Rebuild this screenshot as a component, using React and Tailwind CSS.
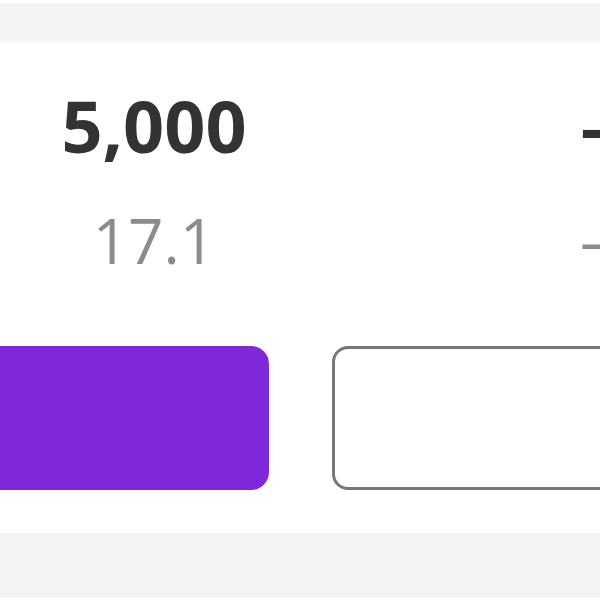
import React from 'react';

const stats = [
  { value: '5,000', sub: '17.1' },
  { value: '–', sub: '–' },
];

function App() {
  return (
    <div className="w-[600px] h-[600px] overflow-hidden bg-white font-['Open_Sans',sans-serif]">
      <div className="h-[3px] bg-white" />
      <div className="h-[39px] bg-[#f4f4f4]" />

      <div className="h-[491px] pt-[47px]">
        <div className="grid grid-cols-[308px_1fr]">
          {stats.map((s, i) => (
            <div key={i} className={i === 0 ? 'text-center' : 'pl-[272px] whitespace-nowrap'}>
              <div className="text-[72px] leading-none font-bold text-[#333333]">{s.value}</div>
              <div className="mt-[48px] text-[62px] leading-none text-[#8c8c8c]">{s.sub}</div>
            </div>
          ))}
        </div>

        <div className="mt-[75px] flex gap-[63px]">
          <button className="ml-[-30px] w-[299px] h-[144px] shrink-0 rounded-[18px] bg-[#7e27db]" />
          <button className="w-[320px] h-[144px] shrink-0 rounded-[16px] border-[3px] border-[#777777] bg-white" />
        </div>
      </div>

      <div className="h-[65px] bg-[#f4f4f4]" />
    </div>
  );
}

export default App;
